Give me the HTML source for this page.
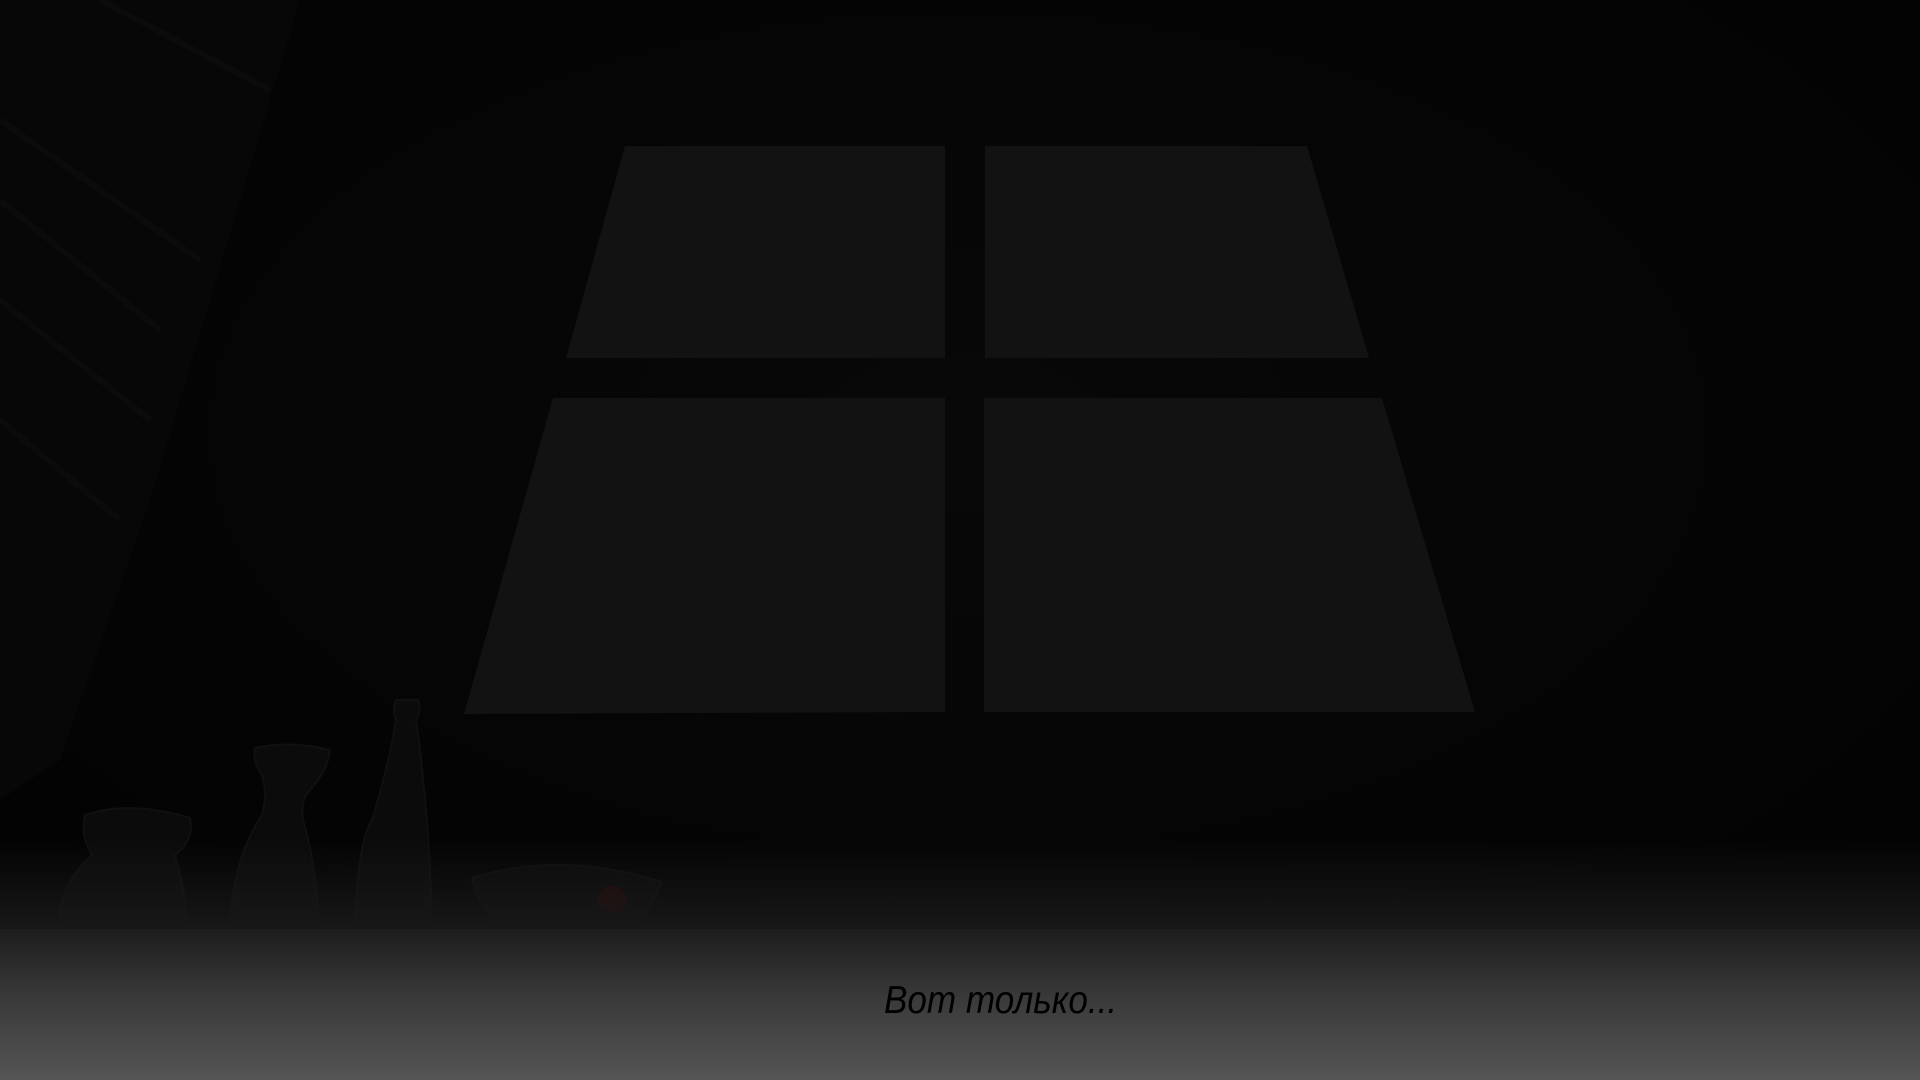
<!DOCTYPE html>
<html><head><meta charset="utf-8"><style>
html,body{margin:0;padding:0;width:1920px;height:1080px;overflow:hidden;background:#040404}
svg{position:absolute;left:0;top:0}
.box{position:absolute;left:0;top:929px;width:1920px;height:151px;background:linear-gradient(#1d1d1d,#393939 45%,#555)}
.fade{position:absolute;left:0;top:840px;width:1920px;height:90px;background:linear-gradient(rgba(20,20,20,0),#181818)}
.t{position:absolute;left:884px;top:979px;font:italic 39px "Liberation Sans Narrow","Liberation Sans",sans-serif;color:#000;transform:scaleX(0.9);transform-origin:left}
</style></head><body>
<svg width="1920" height="1080">
<defs><radialGradient id="g" cx="50%" cy="40%" r="60%"><stop offset="0" stop-color="#080808"/><stop offset="1" stop-color="#030303"/></radialGradient></defs>
<rect width="1920" height="1080" fill="url(#g)"/>
<polygon points="0,0 300,0 150,500 60,760 0,800" fill="#070707"/>
<g stroke="#0b0b0b" stroke-width="6">
<line x1="0" y1="120" x2="200" y2="260"/><line x1="0" y1="200" x2="160" y2="330"/><line x1="0" y1="300" x2="150" y2="420"/><line x1="100" y1="0" x2="270" y2="90"/><line x1="0" y1="420" x2="120" y2="520"/>
</g>
<g fill="#121212">
<polygon points="625,146 945,146 945,358 566,358"/>
<polygon points="985,146 1307,146 1369,358 985,358"/>
<polygon points="553,398 945,398 945,712 464,714"/>
<polygon points="984,398 1382,398 1475,712 984,712"/>
</g>
<g fill="#0b0b0b" stroke="#101010" stroke-width="2">
<path d="M85,815 Q130,800 190,818 Q195,840 175,855 Q188,900 186,929 L60,929 Q55,890 92,855 Q80,835 85,815Z"/>
<path d="M255,748 Q290,740 330,750 Q328,770 310,790 Q300,800 303,820 Q318,870 318,929 L230,929 Q232,860 262,815 Q268,795 262,775 Q252,760 255,748Z"/>
<path d="M396,700 L418,700 Q422,712 416,720 Q430,820 432,929 L355,929 Q358,840 372,820 Q390,760 396,720 Q392,710 396,700Z"/>
<path d="M472,878 Q560,850 662,882 Q650,910 635,929 L500,929 Q478,905 472,878Z"/>
</g>
<circle cx="612" cy="900" r="14" fill="#2a0808"/>
</svg>
<div class="fade"></div>
<div class="box"></div>
<div class="t">Вот только...</div>
</body></html>
